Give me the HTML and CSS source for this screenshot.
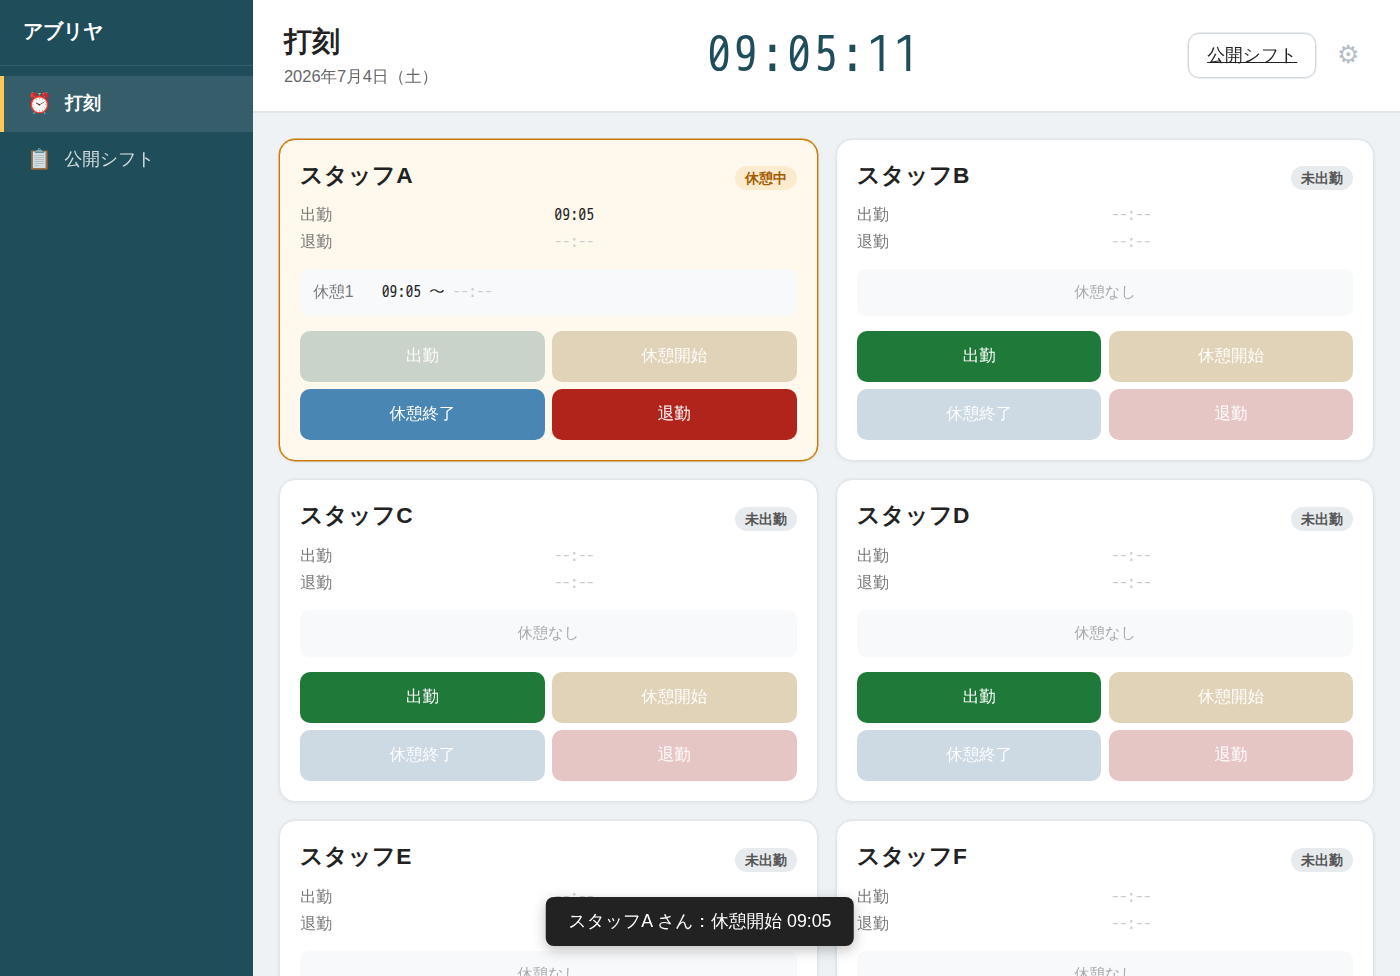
FILE: index.html
```html
<!DOCTYPE html>
<html lang="ja">
<head>
  <meta charset="UTF-8">
  <meta name="viewport" content="width=device-width, initial-scale=1">
  <title>打刻</title>
  <link rel="stylesheet" href="styles.css">
</head>
<body>
<div class="app">
  <aside class="sidebar">
    <div class="brand">アブリヤ</div>
    <nav class="nav">
      <a class="nav-item active"><span class="nav-icon">⏰</span><span class="nav-text">打刻</span></a>
      <a class="nav-item"><span class="nav-icon">📋</span><span class="nav-text">公開シフト</span></a>
    </nav>
  </aside>
  <div class="main">
    <header class="header">
      <div class="header-left">
        <h1>打刻</h1>
        <div class="date">2026年7月4日（土）</div>
      </div>
      <div class="clock">09:05:11</div>
      <div class="header-right">
        <a class="shift-link">公開シフト</a>
        <span class="gear">⚙</span>
      </div>
    </header>
    <main class="cards"></main>
  </div>
</div>
<div class="toast">スタッフA さん：休憩開始 09:05</div>
<script>
  const none = '<span class="none">--:--</span>';
  const staff = [
    { name: 'スタッフA', start: '09:05', rest: '09:05' },
    { name: 'スタッフB' },
    { name: 'スタッフC' },
    { name: 'スタッフD' },
    { name: 'スタッフE' },
    { name: 'スタッフF' }
  ];

  document.querySelector('.cards').innerHTML = staff.map(s => {
    const on = s.rest ? true : false;
    const restBox = on
      ? `<div class="rest"><span class="rest-label">休憩1</span><span class="time">${s.rest} 〜 ${none}</span></div>`
      : '<div class="rest empty">休憩なし</div>';
    return `
    <section class="card ${on ? 'resting' : ''}">
      <div class="card-head">
        <h2>${s.name}</h2>
        <span class="badge">${on ? '休憩中' : '未出勤'}</span>
      </div>
      <div class="times">
        <span>出勤</span><span class="time">${s.start || none}</span>
        <span>退勤</span><span class="time">${none}</span>
      </div>
      ${restBox}
      <div class="buttons">
        <button class="btn in" ${on ? 'disabled' : ''}>出勤</button>
        <button class="btn rest-start" disabled>休憩開始</button>
        <button class="btn rest-end" ${on ? '' : 'disabled'}>休憩終了</button>
        <button class="btn out" ${on ? '' : 'disabled'}>退勤</button>
      </div>
    </section>`;
  }).join('');
</script>
</body>
</html>
```
FILE: styles.css
```css
*{
  box-sizing: border-box;
}
body{
  margin: 0;
  height: 100vh;
  overflow: hidden;
  font-family: "Liberation Sans", "WenQuanYi Zen Hei", "Noto Sans CJK JP", sans-serif;
  font-size: 16px;
  color: #222;
  background: #eef2f5;
}
h1, h2{
  margin: 0;
}
h1, h2, .brand, .badge, .nav-item.active{
  font-family: "Liberation Sans", sans-serif;
}
.app{
  display: flex;
  height: 100vh;
}

/* sidebar */
.sidebar{
  width: 253.4px;
  flex-shrink: 0;
  background: #1f4e5a;
  color: white;
}
.brand{
  height: 66px;
  padding: 0 23px 2px;
  display: flex;
  align-items: center;
  font-size: 19.5px;
  font-weight: bold;
  border-bottom: 1px solid #35606b;
}
.nav{
  padding-top: 10px;
}
.nav-item{
  display: flex;
  align-items: center;
  height: 56px;
  padding: 0 0 2px 23px;
  border-left: 4px solid transparent;
  font-size: 17.8px;
  color: rgba(255,255,255,.8);
}
.nav-icon{
  width: 24px;
  margin-right: 13.5px;
  text-align: center;
  font-size: 20px;
}
.nav-item.active{
  background: #365e6a;
  border-left-color: #ffc857;
  color: white;
  font-size: 17.5px;
  font-weight: bold;
}

/* header */
.main{
  flex: 1;
  display: flex;
  flex-direction: column;
}
.header{
  height: 113px;
  flex-shrink: 0;
  display: flex;
  align-items: center;
  justify-content: space-between;
  padding: 0 41px 0 30.5px;
  background: white;
  border-bottom: 2px solid #e1e6ea;
}
.header h1{
  margin-top: -2px;
  font-size: 28px;
  line-height: 40px;
}
.date{
  margin-top: 2px;
  font-size: 16.5px;
  line-height: 24px;
  color: #666;
}
.clock{
  font-family: "WenQuanYi Zen Hei Mono", "Noto Sans Mono CJK JP", monospace;
  font-size: 48.5px;
  letter-spacing: 0.05em;
  margin: -1px 0 0 1px;
  color: #1f4e5a;
}
.header-right{
  display: flex;
  align-items: center;
  gap: 21px;
}
.shift-link{
  height: 45px;
  padding: 0 17.7px;
  line-height: 43px;
  font-size: 17.8px;
  text-decoration: underline;
  border: 1px solid #d0d7dd;
  box-shadow: 0 0 0 .4px #d0d7dd;
  border-radius: 11px;
}
.gear{
  margin-top: -2px;
  font-size: 25px;
  color: #b4bdc5;
}

/* staff cards */
.cards{
  display: grid;
  grid-template-columns: 1fr 1fr;
  gap: 18.4px;
  padding: 25.5px 25.7px 25.5px 25.8px;
}
.card{
  height: 322.6px;
  padding: 20px;
  background: white;
  border: 1px solid #e1e6ea;
  border-radius: 16px;
  box-shadow: 0 0 0 .4px #e1e6ea, 0 1px 4px rgba(0,0,0,.06);
}
.card.resting{
  background: #fff8ec;
  border-color: #c97a00;
  box-shadow: 0 0 0 .4px #c97a00, 0 1px 4px rgba(0,0,0,.06);
}
.card-head{
  display: flex;
  justify-content: space-between;
  height: 42.9px;
}
.card h2{
  font-size: 22.7px;
  line-height: 30.6px;
}
.badge{
  height: 24px;
  margin-top: 6.5px;
  padding: 0 10px;
  font-size: 14px;
  line-height: 24px;
  font-weight: bold;
  border-radius: 12px;
  background: #e8ebee;
  color: #555;
}
.resting .badge{
  background: #fdebd0;
  color: #a55d00;
}
.times{
  display: grid;
  grid-template-columns: 1fr 1fr;
  column-gap: 12px;
  grid-auto-rows: 26.5px;
  line-height: 26.5px;
  color: #777;
}
.time{
  font-family: "WenQuanYi Zen Hei Mono", "Noto Sans Mono CJK JP", monospace;
  font-size: 16px;
  color: #222;
}
.none{
  color: #ccc;
}
.rest{
  display: flex;
  align-items: center;
  height: 47.5px;
  margin-top: 13.4px;
  padding: 0 13px;
  border-radius: 9px;
  background: #f7f9fb;
}
.rest-label{
  width: 68.5px;
  font-size: 15.8px;
  color: #777;
}
.rest .time{
  font-size: 15.8px;
}
.rest.empty{
  justify-content: center;
  font-size: 15.3px;
  color: #aaa;
}
.buttons{
  display: grid;
  grid-template-columns: 1fr 1fr;
  gap: 7.5px;
  margin-top: 15px;
}
.btn{
  height: 50.7px;
  padding: 0 0 1px;
  border: none;
  border-radius: 10px;
  font-family: inherit;
  font-size: 16.5px;
  color: white;
}
.in{
  background: #1f7a3a;
}
.rest-end{
  background: #4a86b4;
}
.out{
  background: #b0241c;
}
.in:disabled{
  background: #c9d3c9;
}
.rest-start:disabled{
  background: #e1d3b8;
}
.rest-end:disabled{
  background: #cdd9e3;
}
.out:disabled{
  background: #e6c6c5;
}
.btn:disabled{
  color: rgba(255,255,255,.95);
}

/* message at the bottom of the window */
.toast{
  position: fixed;
  bottom: 30.5px;
  left: 50%;
  transform: translateX(-50%);
  height: 48.5px;
  padding: 0 22.8px;
  line-height: 48px;
  font-size: 17.75px;
  white-space: nowrap;
  color: white;
  background: #222;
  border-radius: 8px;
  box-shadow: 0 4px 14px rgba(0,0,0,.25);
}
```
